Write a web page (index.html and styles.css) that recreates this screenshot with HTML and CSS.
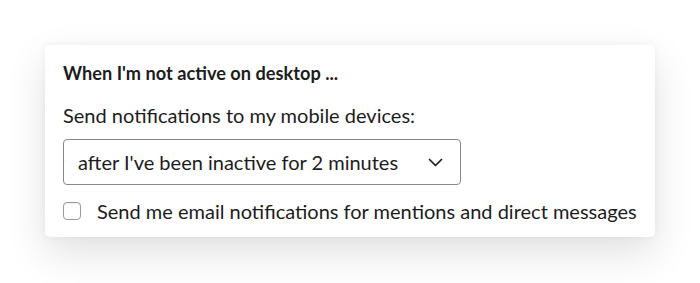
FILE: index.html
```html
<!DOCTYPE html>
<html>
<head>
<meta charset="utf-8">
<link rel="stylesheet" href="styles.css">
</head>
<body>
<div class="card">
  <div class="heading">When I'm not active on desktop ...</div>
  <div class="label">Send notifications to my mobile devices:</div>
  <div class="select">
    <span class="select-text">after I've been inactive for 2 minutes</span>
    <svg class="chevron" width="15" height="9" viewBox="0 0 15 9"><path d="M1.5 1.5l6 6 6-6" fill="none" stroke="#1d1c1d" stroke-width="1.7" stroke-linecap="round" stroke-linejoin="round"/></svg>
  </div>
  <label class="check-row">
    <span class="checkbox"></span>
    <span class="check-label">Send me email notifications for mentions and direct messages</span>
  </label>
</div>
</body>
</html>
```
FILE: styles.css
```css
html, body {
  margin: 0;
  padding: 0;
  background: #fff;
}
body {
  font-family: Lato, "Liberation Sans", sans-serif;
  color: #1d1c1d;
  box-sizing: border-box;
  height: 283px;
  padding: 45px 0 0 45px;
  overflow: hidden;
}
.card {
  width: 610px;
  box-sizing: border-box;
  padding: 17px 18px 14px 18px;
  background: #fff;
  border-radius: 5px;
  box-shadow: 0 0 8px rgba(0, 0, 0, 0.05), 0 16px 40px rgba(0, 0, 0, 0.12);
}
.heading {
  font-weight: 700;
  font-size: 18.2px;
  line-height: 22px;
}
.label {
  font-size: 20px;
  line-height: 24px;
  margin-top: 19px;
}
.select {
  margin-top: 12px;
  width: 398px;
  height: 46px;
  box-sizing: border-box;
  border: 1px solid #8a898a;
  border-radius: 4px;
  display: flex;
  align-items: center;
  justify-content: space-between;
  padding: 0 17px 0 14px;
}
.select-text {
  font-size: 20px;
  line-height: 24px;
}
.check-row {
  display: flex;
  align-items: center;
  margin-top: 14px;
  line-height: 24px;
}
.checkbox {
  width: 18px;
  height: 18px;
  box-sizing: border-box;
  border: 1px solid #9b9a9b;
  border-radius: 4px;
  box-shadow: inset 0 1px 1px rgba(0, 0, 0, 0.08);
  flex: none;
}
.check-label {
  font-size: 20px;
  margin-left: 16px;
}
```
